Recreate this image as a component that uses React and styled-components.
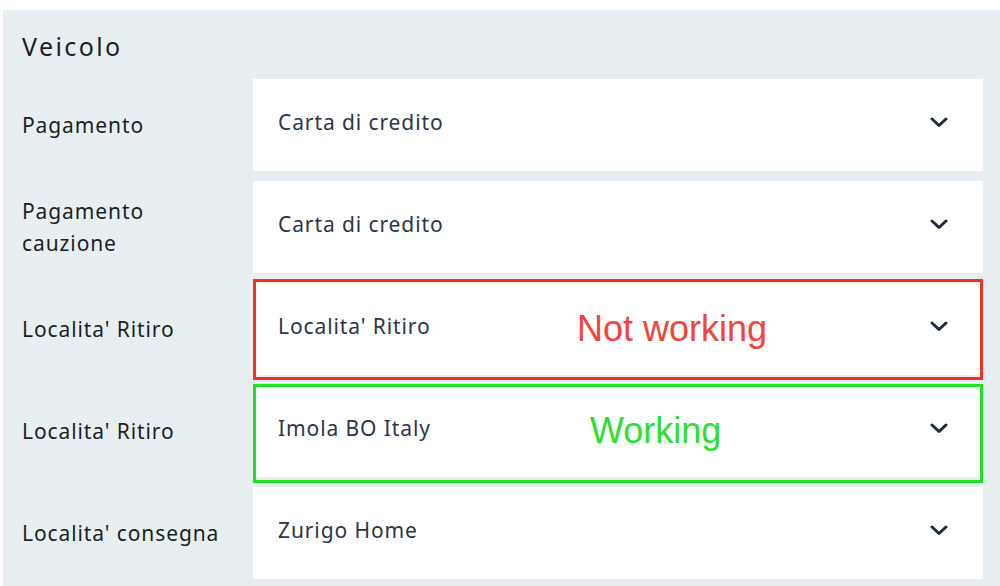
import React from "react";
import styled, { createGlobalStyle } from "styled-components";

const GlobalStyle = createGlobalStyle`
  body {
    margin: 0;
    background: #ffffff;
    font-family: "Noto Sans", "Liberation Sans", sans-serif;
  }
`;

const Panel = styled.section`
  margin: 10px 0 0 3px;
  background-color: #e8eff3;
  padding: 23px 17px 12px 19px;
  height: 576px;
  box-sizing: border-box;
  overflow: hidden;
`;

const Title = styled.h2`
  margin: 0 0 19px;
  font-size: 25px;
  font-weight: 400;
  letter-spacing: 2.4px;
  line-height: 27px;
  color: #1b1f24;
`;

const Form = styled.div`
  display: grid;
  grid-template-columns: 231px 1fr;
  row-gap: 10px;
`;

const Label = styled.div`
  display: flex;
  align-items: center;
  font-size: 21px;
  letter-spacing: 0.9px;
  line-height: 32px;
  color: #1b1f24;
  padding-right: 10px;
  white-space: nowrap;
`;

const Select = styled.div`
  position: relative;
  height: 92px;
  background: #ffffff;
  display: flex;
  align-items: center;
  justify-content: space-between;
  padding: 0 35px 6px 25px;
  box-sizing: border-box;
  color: #2b3648;
  font-size: 21px;
  letter-spacing: 0.9px;
`;

const Chevron = () => (
  <svg width="18" height="11" viewBox="0 0 18 11" fill="none">
    <polyline
      points="2,2 9,8.5 16,2"
      stroke="#1f2a3c"
      strokeWidth="3"
      strokeLinecap="round"
      strokeLinejoin="round"
    />
  </svg>
);

const Marker = styled.div`
  position: absolute;
  left: 0;
  right: 0;
  top: ${(p) => p.top}px;
  bottom: ${(p) => p.bottom}px;
  border: 3px solid ${(p) => p.color};
  pointer-events: none;
`;

const Note = styled.span`
  position: absolute;
  left: ${(p) => p.left}px;
  top: 50%;
  transform: translateY(-50%);
  font-family: "Liberation Sans", Arial, sans-serif;
  font-size: 36px;
  letter-spacing: 0;
  color: ${(p) => p.color};
`;

const rows = [
  { label: "Pagamento", value: "Carta di credito" },
  { label: <>Pagamento<br />cauzione</>, value: "Carta di credito" },
  {
    label: "Localita' Ritiro",
    value: "Localita' Ritiro",
    mark: { color: "#f4301f", top: -4, bottom: -5 },
    note: { text: "Not working", color: "#f2443a", left: 324 },
  },
  {
    label: "Localita' Ritiro",
    value: "Imola BO Italy",
    mark: { color: "#22e022", top: -1, bottom: -6 },
    note: { text: "Working", color: "#2ee02e", left: 337 },
  },
  { label: "Localita' consegna", value: "Zurigo Home" },
];

const App = () => {
  return (
    <>
      <GlobalStyle />
      <Panel>
        <Title>Veicolo</Title>
        <Form>
          {rows.map((row, i) => (
            <React.Fragment key={i}>
              <Label>
                <span>{row.label}</span>
              </Label>
              <Select>
                <span>{row.value}</span>
                <Chevron />
                {row.note && (
                  <Note color={row.note.color} left={row.note.left}>
                    {row.note.text}
                  </Note>
                )}
                {row.mark && (
                  <Marker
                    color={row.mark.color}
                    top={row.mark.top}
                    bottom={row.mark.bottom}
                  />
                )}
              </Select>
            </React.Fragment>
          ))}
        </Form>
      </Panel>
    </>
  );
};

export default App;
